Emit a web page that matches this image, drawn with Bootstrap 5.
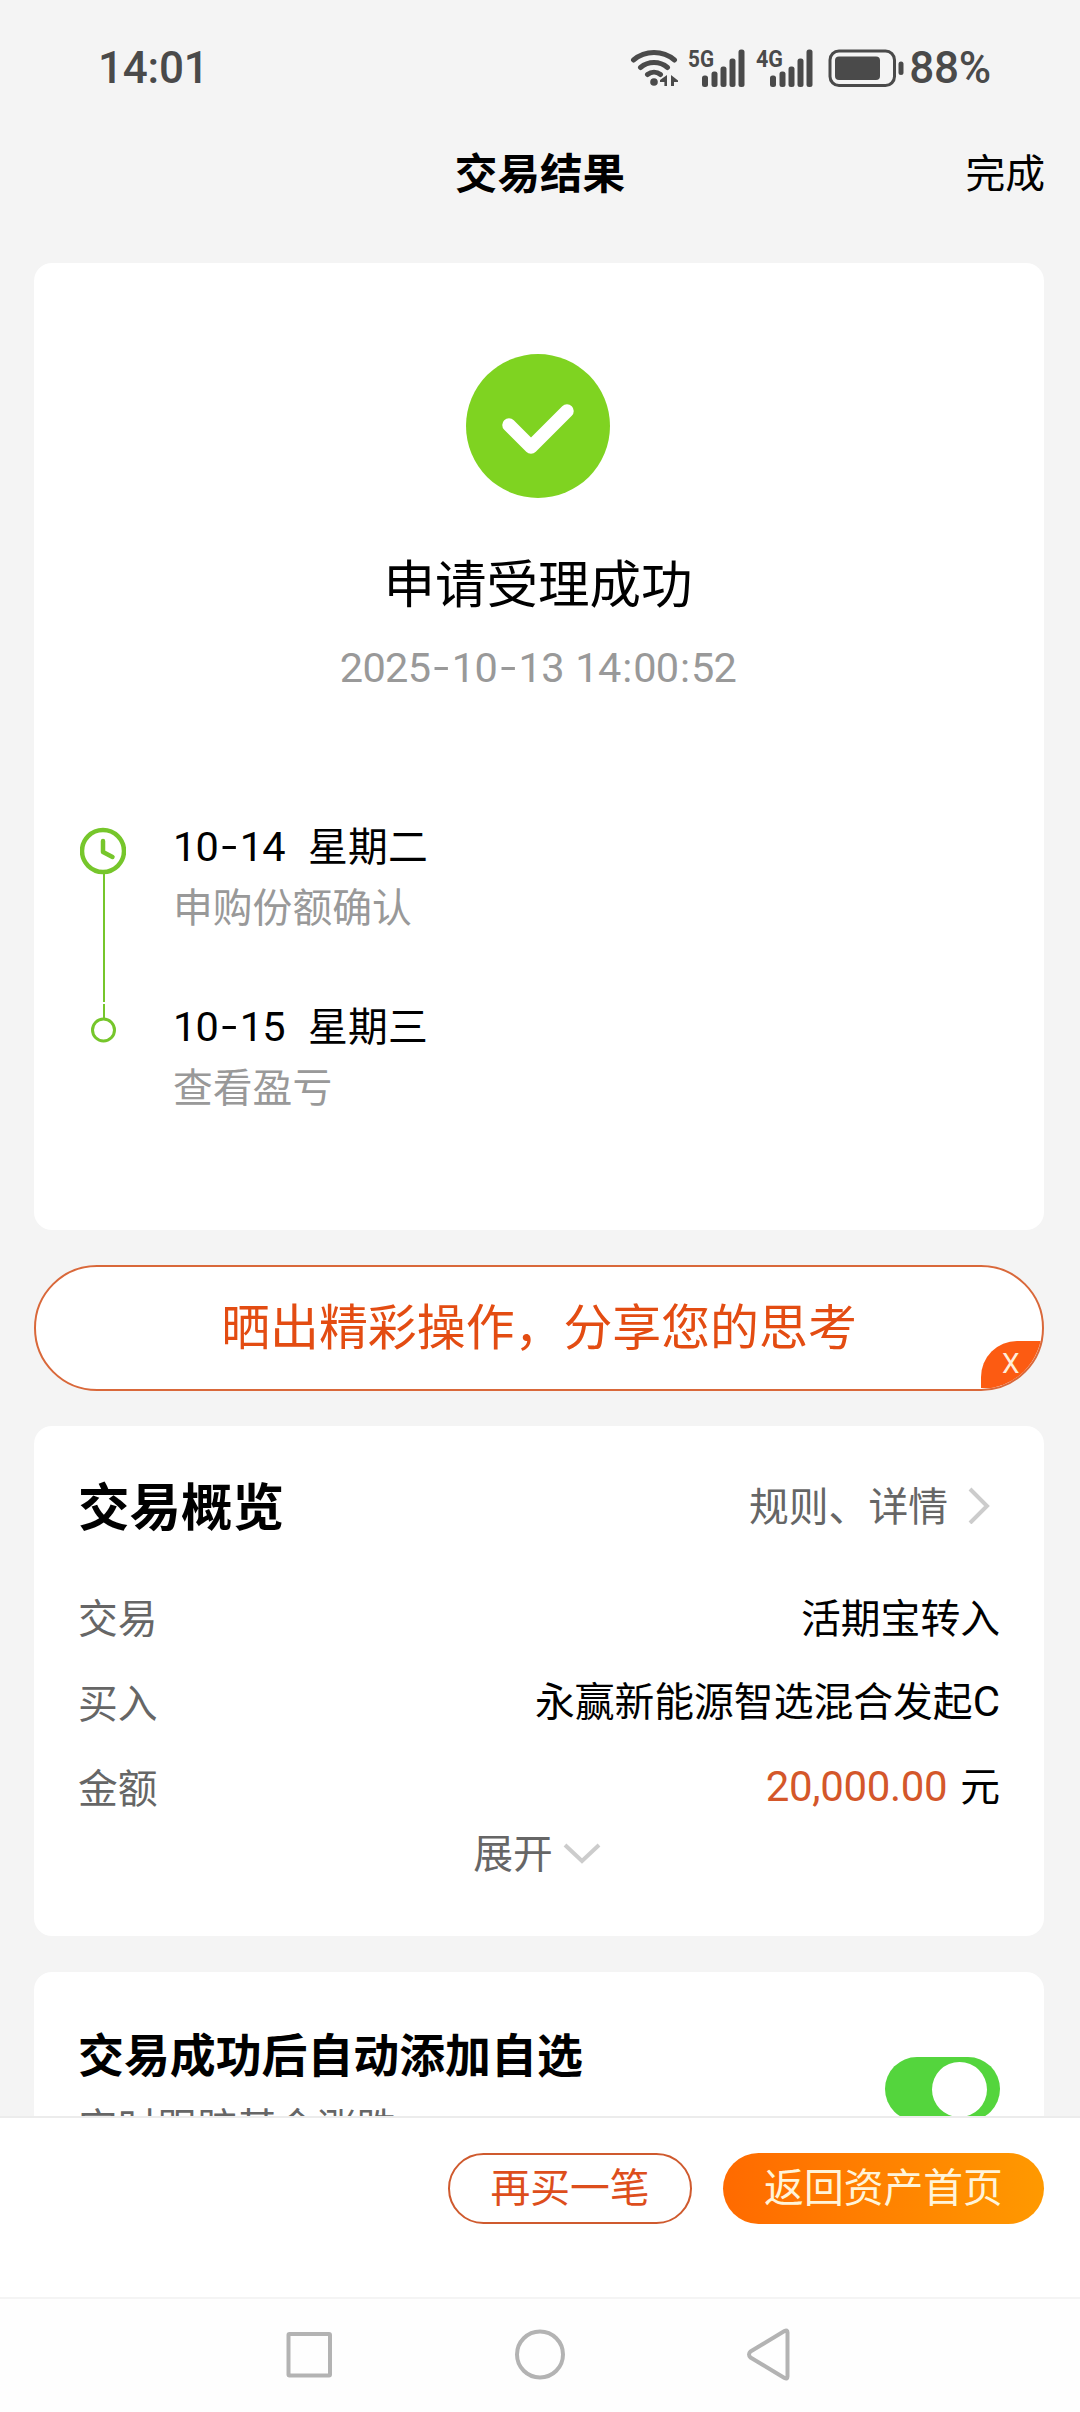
<!DOCTYPE html>
<html lang="zh-CN">
<head>
<meta charset="utf-8">
<meta name="viewport" content="width=device-width, initial-scale=1">
<title>交易结果</title>
<link rel="stylesheet" href="https://cdn.jsdelivr.net/npm/bootstrap@5.3.0/dist/css/bootstrap.min.css">
<style>
body{background:#f4f4f4;color:#000;font-family:"Noto Sans CJK SC",sans-serif;font-size:39.8px;line-height:60px;width:1080px;height:2412px;overflow:hidden}
.latin{font-family:Roboto,sans-serif}
.status-bar{height:135px;padding:0 89px 0 98px;color:#4a4a4a}
.status-time{font-size:44px;font-weight:500;letter-spacing:-.2px}
.title-bar{height:128px;padding-top:6px}
.title-bar h1{font-size:42.6px;line-height:60px}
.title-bar .side{width:240px;padding-right:35px}
.panel{margin:0 36px 0 34px;border-radius:18px;border:0}
.result-panel{height:967px;padding:91px 2px 0 0}
.result-title{font-size:51.5px;line-height:70px;margin-top:48px}
.result-time{font-size:41.5px;line-height:50px;margin-top:27px;color:#999;letter-spacing:-.7px;word-spacing:2px}
.colon{padding:0 1.6px}
.dash{display:inline-block;width:21.5px;text-align:center;transform:scaleX(1.35) translateY(-1px)}
.steps{margin-top:126px;padding-left:46px}
.step-mark{width:46px;margin-right:47px}
.step-row{height:180px}
.step-date{white-space:pre;font-size:41.5px;letter-spacing:-.7px;height:58px;line-height:56px}
.step-date .wk{font-size:39.8px;margin-left:23px;letter-spacing:0}
.step-note{line-height:56px}
.muted9{color:#999}
.muted6{color:#666}
.share{height:126px;margin-top:35px;padding-bottom:9px;border:2px solid #d9683a;border-radius:63px;background:#fff;overflow:hidden;color:#e34c12;font-size:48.9px;line-height:72px}
.share-close{right:0;bottom:1px;width:61px;height:47px;background:#fc5b12;border-radius:36px 0 0 0;color:#ffeeda;font-size:28px;line-height:46px;padding-left:21px}
.overview{height:510px;margin-top:35px;padding:48px 44px 0 44px}
.overview h2{font-size:51.5px;line-height:60px}
.overview .line{height:85px}
.rows{padding-top:39px}
.amount{color:#d4572a;font-size:42px;letter-spacing:-.35px;margin-right:13px}
.fund-class{font-size:42px}
.expand{margin-top:-7px}
.auto-add{height:144px;margin-top:36px;padding:48px 44px 0 44px;border-radius:18px 18px 0 0;overflow:hidden}
.auto-add h2{font-size:45.9px;line-height:64px}
.auto-add p{font-size:39.8px;line-height:60px;margin-top:11px}
.switch-on{width:115px;height:64px;border-radius:32px;background:#54d53d;margin-top:37px;padding-right:13px}
.knob{width:55px;height:55px;border-radius:50%;background:#fff}
.actions{height:181px;border-top:2px solid #ececec;background:#fff;padding:35px 36px 0 0;gap:31px}
.actions .btn{height:71px;border-radius:36px;padding:0 0 7px;font-size:39.8px;line-height:60px}
.btn-again{width:244px;border:2px solid #cf5a2e;color:#dd4e1c}
.btn-home{width:321px;border:0;color:#fff4d9;background:linear-gradient(90deg,#ff6a00,#ff9900)}
.sys-nav{height:115px;border-top:2px solid #f4f4f4;background:#fefefe}
svg{display:block;flex:none}
</style>
<script src="https://cdn.jsdelivr.net/npm/bootstrap@5.3.0/dist/js/bootstrap.bundle.min.js"></script>
</head>
<body class="m-0">
<header>
  <div class="status-bar d-flex align-items-center justify-content-between latin">
    <span class="status-time">14:01</span>
    <div class="d-flex align-items-center">
      <svg width="279" height="40" viewBox="0 0 279 40" fill="#4a4a4a">
        <g fill="none" stroke="#4a4a4a" stroke-width="5" stroke-linecap="round">
          <path d="M3.500 12a32 32 0 0 1 41 0M10.500 19.500a21 21 0 0 1 27 0M17.500 26.500a10.500 10.500 0 0 1 13 0" />
        </g>
        <circle cx="24" cy="34" r="3.800"/>
        <path d="M37 27v11h-2.600v-4h-4.400v-2zM41 27l7 5.500v1.500h-4v4h-3z"/>
        <text x="58" y="19" font-family="Roboto" font-size="24" font-weight="700" textLength="26" lengthAdjust="spacingAndGlyphs">5G</text>
        <rect x="72" y="27.500" width="6" height="11.500" rx="2.500"/><rect x="81.500" y="23.500" width="6" height="15.500" rx="2.500"/><rect x="90.500" y="18.500" width="6" height="20.500" rx="2.500"/><rect x="99.500" y="10.500" width="6" height="28.500" rx="2.500"/><rect x="108.500" y="1.500" width="6" height="37.500" rx="2.500"/>
        <text x="126" y="19" font-family="Roboto" font-size="24" font-weight="700" textLength="27" lengthAdjust="spacingAndGlyphs">4G</text>
        <rect x="140" y="27.500" width="6" height="11.500" rx="2.500"/><rect x="149.500" y="23.500" width="6" height="15.500" rx="2.500"/><rect x="158.500" y="18.500" width="6" height="20.500" rx="2.500"/><rect x="167.500" y="10.500" width="6" height="28.500" rx="2.500"/><rect x="176.500" y="1.500" width="6" height="37.500" rx="2.500"/>
        <rect x="200" y="3" width="64.500" height="34.500" rx="9" fill="none" stroke="#4a4a4a" stroke-width="3"/>
        <rect x="205" y="8.500" width="45" height="23.500" rx="4"/>
        <rect x="268.500" y="13.500" width="5" height="13.500" rx="2.500"/>
      </svg>
      <span class="status-time">88%</span>
    </div>
  </div>
  <div class="title-bar d-flex justify-content-between">
    <div class="side"></div>
    <h1 class="fw-bold m-0">交易结果</h1>
    <div class="side text-end">完成</div>
  </div>
</header>
<main>
  <section class="panel card result-panel">
    <svg class="mx-auto" width="144" height="144" viewBox="0 0 144 144"><circle cx="72" cy="72" r="72" fill="#7fd321"/><path d="M43 71l22 22 36-36" fill="none" stroke="#fff" stroke-width="13.500" stroke-linecap="round" stroke-linejoin="round"/></svg>
    <div class="result-title text-center">申请受理成功</div>
    <div class="result-time latin text-center">2025<span class="dash">-</span>10<span class="dash">-</span>13 14<span class="colon">:</span>00<span class="colon">:</span>52</div>
    <div class="steps d-flex">
      <svg class="step-mark" width="46" height="240" viewBox="0 0 46 240" fill="none" stroke="#76c62b">
        <circle cx="23" cy="32" r="21" stroke-width="4.500"/><path d="M23 22v11l9.500 5" stroke-width="4.500" stroke-linecap="round" stroke-linejoin="round"/>
        <path d="M24 54v129M24 185v14" stroke-width="2"/><circle cx="23.500" cy="211" r="11" stroke-width="3"/>
      </svg>
      <div>
        <div class="step-row"><div class="step-date latin">10<span class="dash">-</span>14<span class="wk">星期二</span></div><div class="muted9 step-note">申购份额确认</div></div>
        <div class="step-row"><div class="step-date latin">10<span class="dash">-</span>15<span class="wk">星期三</span></div><div class="muted9 step-note">查看盈亏</div></div>
      </div>
    </div>
  </section>
  <div class="panel share position-relative d-flex align-items-center justify-content-center">
    <span>晒出精彩操作，分享您的思考</span>
    <span class="share-close latin position-absolute">X</span>
  </div>
  <section class="panel card overview">
    <div class="d-flex align-items-center justify-content-between">
      <h2 class="fw-bold m-0">交易概览</h2>
      <div class="d-flex align-items-center muted6"><span>规则、详情</span>
        <svg width="52" height="40" viewBox="0 0 52 40"><path d="M22 5l17 17-17 17" fill="none" stroke="#ccc" stroke-width="4"/></svg>
      </div>
    </div>
    <div class="rows">
      <div class="line d-flex align-items-center justify-content-between"><span class="muted6">交易</span><span>活期宝转入</span></div>
      <div class="line d-flex align-items-center justify-content-between"><span class="muted6">买入</span><span>永赢新能源智选混合发起<span class="latin fund-class">C</span></span></div>
      <div class="line d-flex align-items-center justify-content-between"><span class="muted6">金额</span><span><span class="amount latin">20,000.00</span>元</span></div>
    </div>
    <div class="expand d-flex align-items-center justify-content-center muted6"><span>展开</span>
      <svg width="52" height="30" viewBox="0 0 52 30"><path d="M12 9l17 16 17-16" fill="none" stroke="#ccc" stroke-width="4"/></svg>
    </div>
  </section>
  <section class="panel bg-white auto-add d-flex justify-content-between">
    <div><h2 class="fw-bold m-0">交易成功后自动添加自选</h2><p class="muted6 mb-0">实时跟踪基金涨跌</p></div>
    <div class="switch-on d-flex align-items-center justify-content-end flex-shrink-0"><span class="knob"></span></div>
  </section>
</main>
<footer>
  <div class="actions d-flex justify-content-end">
    <button class="btn btn-again" type="button">再买一笔</button>
    <button class="btn btn-home" type="button">返回资产首页</button>
  </div>
  <nav class="sys-nav">
    <svg width="1080" height="112" viewBox="0 0 1080 112" fill="none" stroke="#b3b3b3" stroke-width="4" stroke-linejoin="round"><rect x="288.500" y="35" width="41.500" height="41.500" rx="1"/><circle cx="540" cy="55.500" r="23"/><path d="M787.500 33.500q0-3-3-1.500l-34 20.500q-3 3 0 6l34 20.500q3 1.500 3-1.500z"/></svg>
  </nav>
</footer>
</body>
</html>
